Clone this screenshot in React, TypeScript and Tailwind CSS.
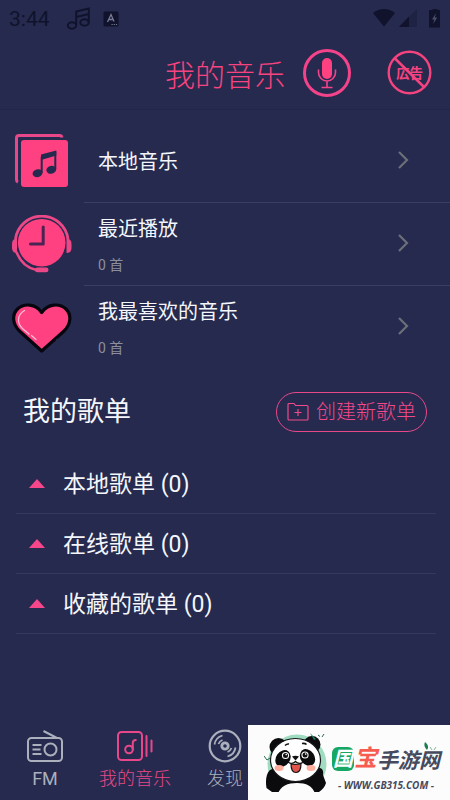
const LocalIcon = () => (
    <svg className="w-[60px] h-[60px]" viewBox="0 0 60 60" fill="none">
        <path d="M50 5.500A2.500 2.500 0 0 0 47.500 3.500H7A2.500 2.500 0 0 0 4.500 6v41.500a2.500 2.500 0 0 0 1.500 2.500" stroke="#e8488a" strokeWidth="3" />
        <rect x="9" y="8" width="47" height="47" rx="3" fill="#ff4081" />
        <path d="M29.700 41V25.500L43.300 21V37" stroke="#252a4e" strokeWidth="2" />
        <path d="M29 22.500L44.300 18.500V23.500L29 28z" fill="#252a4e" />
        <ellipse cx="25.500" cy="41.200" rx="5" ry="3.900" transform="rotate(-15 25.500 41.200)" fill="#252a4e" />
        <ellipse cx="39.300" cy="37.800" rx="5" ry="3.900" transform="rotate(-15 39.300 37.800)" fill="#252a4e" />
    </svg>
)

const RecentIcon = () => (
    <svg className="w-[60px] h-[60px]" viewBox="0 0 60 60" fill="none">
        <circle cx="29.700" cy="27.700" r="23.800" fill="#ff4081" />
        <path d="M3.500 24A26.500 26.500 0 0 1 56 24" stroke="#ec4787" strokeWidth="2.800" />
        <path d="M5 23.500Q0 23.500 0 29v4q0 5 5 5z" fill="#ec4787" />
        <path d="M54.500 23.500Q59.500 23.500 59.500 29v4q0 5-5 5z" fill="#ec4787" />
        <path d="M4.500 37c3.500 9.500 10.500 16 20 18" stroke="#ec4787" strokeWidth="2.600" />
        <rect x="23" y="52.500" width="13.500" height="4.800" rx="2.400" fill="#ec4787" />
        <path d="M31.200 12V29H18.500" stroke="#4a2452" strokeWidth="3" strokeLinecap="round" strokeLinejoin="round" />
    </svg>
)

const HeartIcon = () => (
    <svg className="w-[60px] h-[60px]" viewBox="0 0 60 60" fill="none">
        <path d="M29.700 53L8 33.500C0 26 0 16.500 5.500 11C12 5 23.500 5.500 29.700 14.500C36 5.500 47.500 5 54 11C59.500 16.500 59.500 26 51.500 33.500z" fill="#ff4081" stroke="#07060f" strokeWidth="3.200" strokeLinejoin="round" />
        <path d="M44.500 41l1.500 3" stroke="#252a4e" strokeWidth="1.800" />
        <path d="M12.500 12.500C4.500 17 5 26 11 31L17 36M19.500 37.500l4.500 4" stroke="#ffc4d9" strokeWidth="1.200" strokeLinecap="round" />
    </svg>
)

const Chevron = () => (
    <svg className="w-5 h-6" viewBox="0 0 20 24" fill="none">
        <path d="M6 4l8 8-8 8" stroke="#6c7078" strokeWidth="2.200" />
    </svg>
)

const StatusBar = () => {
    return (
        <div className="flex items-center h-9 pt-px pl-[9px] pr-[10px] text-[#10132b]">
            <span className="text-[21px] leading-6">3:44</span>
            <svg className="w-6 h-6 ml-4" viewBox="0 0 24 24" fill="none" stroke="currentColor" strokeWidth="2">
                <ellipse cx="6" cy="18.500" rx="4.200" ry="3.200" />
                <ellipse cx="18.500" cy="15.500" rx="4.200" ry="3.200" />
                <path d="M10.200 18V4.500L22.800 1.500v14M10.200 10l12.600-3" />
            </svg>
            <svg className="w-4 h-4 ml-[13px]" viewBox="0 0 16 16">
                <rect x="0.500" y="0.500" width="15" height="15" rx="1.500" fill="currentColor" />
                <path d="M4.500 11L8 3.500l3 7M6 8.500h4" fill="none" stroke="#777b94" strokeWidth="1.300" />
                <path d="M8.500 13.500h6" stroke="#777b94" strokeDasharray="1.200 1" />
            </svg>
            <svg className="w-[70px] h-5 ml-auto" viewBox="0 0 70 20" fill="currentColor">
                <path d="M3 4Q14 -4 25 4L14 17.500z" />
                <path d="M29 18L47 0v18z" opacity=".3" />
                <path d="M29 18L39 7.500V18z" />
                <path d="M60 1h2.500V-1h5V1H70v17.500H59V1z" />
                <path d="M66 4l-4 6.500h2.300L63.300 15l3.900-6.500h-2.400z" fill="#4a4e68" />
            </svg>
        </div>
    )
}

const Header = () => {
    return (
        <header className="border-b border-[#20254b]">
            <StatusBar />
            <div className="flex items-center justify-end h-[73px] pr-[18px]">
                <h1 className="pt-[6px] text-[30px] leading-9 font-light text-[#f7437f]">我的音乐</h1>
                <button type="button" aria-label="语音" className="ml-[18px]">
                    <svg className="w-12 h-12" viewBox="0 0 48 48" fill="none" stroke="#f4438a">
                        <circle cx="24" cy="24" r="22.500" strokeWidth="3" />
                        <rect x="19" y="9" width="10" height="21" rx="5" fill="#ff4081" stroke="none" />
                        <path d="M15.500 20.500v3a8.500 8.500 0 0 0 17 0v-3M24 32v6M18.500 38.500h11" strokeWidth="1.600" />
                    </svg>
                </button>
                <button type="button" aria-label="关闭广告" className="ml-9">
                    <svg className="w-[45px] h-[45px]" viewBox="0 0 45 45" fill="none" stroke="#f4437f">
                        <text x="22.500" y="27.500" textAnchor="middle" fontSize="13.500" fontWeight="700" fill="#f4437f" stroke="none">広告</text>
                        <circle cx="22.500" cy="22.500" r="20.800" strokeWidth="2.400" />
                        <path d="M7.500 8l30 29.500" strokeWidth="2.500" />
                    </svg>
                </button>
            </div>
        </header>
    )
}

const library = [
    { title: '本地音乐', count: '', icon: <LocalIcon /> },
    { title: '最近播放', count: '0 首', icon: <RecentIcon /> },
    { title: '我最喜欢的音乐', count: '0 首', icon: <HeartIcon /> },
]

const Library = () => {
    return (
        <ul className="pt-[10px]">
            {library.map((item) => (
                <li key={item.title} className="group">
                    <a href="#" className="flex items-stretch h-[83px] pl-3">
                        <span className="flex items-center w-[72px] shrink-0">{item.icon}</span>
                        <span className="flex flex-1 items-center border-b border-[#393e62] group-last:border-transparent pl-[14px] pb-[2px] pr-[37px]">
                            <span className="flex flex-col flex-1 gap-3 pt-1">
                                <span className="text-xl leading-7 text-[#f4f6fc]">{item.title}</span>
                                {item.count && <span className="text-sm leading-5 text-[#8b8e9f]">{item.count}</span>}
                            </span>
                            <Chevron />
                        </span>
                    </a>
                </li>
            ))}
        </ul>
    )
}

const playlists = ['本地歌单 (0)', '在线歌单 (0)', '收藏的歌单 (0)']

const Playlists = () => {
    return (
        <section>
            <div className="flex items-center justify-between h-[85px] px-[23px]">
                <h2 className="text-[27px] leading-9 text-[#f4f6fc]">我的歌单</h2>
                <button type="button" className="flex items-center gap-[7px] h-10 px-[10px] rounded-full border border-[#e8488a] text-xl font-light text-[#f3488a]">
                    <svg className="w-[22px] h-5" viewBox="0 0 22 20" fill="none" stroke="currentColor" strokeWidth="1.200">
                        <path d="M1 17V2.500a1 1 0 0 1 1-1h5l1.500 2H20a1 1 0 0 1 1 1V17a1 1 0 0 1-1 1H2a1 1 0 0 1-1-1zM11 7v7M7.500 10.500h7" />
                    </svg>
                    <span className="pt-px">创建新歌单</span>
                </button>
            </div>
            <ul className="pl-4 pr-[14px]">
                {playlists.map((name) => (
                    <li key={name} className="border-b border-[#343a5d]">
                        <button type="button" className="flex items-center w-full h-[59px] pl-[13px] gap-[18px] text-[23px] text-[#f4f6fc]">
                            <svg className="w-4 h-[9px]" viewBox="0 0 16 9">
                                <path d="M0 9L8 0l8 9z" fill="#f8468a" />
                            </svg>
                            <span className="pt-1">{name}</span>
                        </button>
                    </li>
                ))}
            </ul>
        </section>
    )
}

const TabBar = () => {
    return (
        <nav className="grid grid-cols-5 mt-auto h-[75px] pt-1 text-lg leading-6 text-[#acb0bc]">
            <a href="#" className="flex flex-col items-center gap-[2px]">
                <svg className="w-10 h-9" viewBox="0 0 40 36" fill="none" stroke="currentColor" strokeWidth="2">
                    <rect x="3" y="9" width="34" height="23" rx="3.500" />
                    <path d="M18.500 2L32 9M7.500 16h9M7.500 20.500h8M7.500 25h9" />
                    <circle cx="25.500" cy="20.500" r="6" />
                </svg>
                <span>FM</span>
            </a>
            <a href="#" aria-current="page" className="flex flex-col items-center gap-[2px] text-[#e8488a]">
                <svg className="w-10 h-9" viewBox="0 0 40 36" fill="none" stroke="currentColor" strokeWidth="2">
                    <rect x="3" y="3" width="24" height="28" rx="3.500" />
                    <circle cx="14" cy="20.500" r="3.800" />
                    <path d="M17.800 20.500V14q0-3 3-3M31.500 7v20M36.500 11.500v11" strokeLinecap="round" />
                </svg>
                <span className="font-light whitespace-nowrap">我的音乐</span>
            </a>
            <a href="#" className="flex flex-col items-center gap-[2px]">
                <svg className="w-10 h-9" viewBox="0 0 40 36" fill="none" stroke="currentColor" strokeWidth="2.200">
                    <circle cx="20" cy="17" r="15.300" />
                    <circle cx="20" cy="17" r="3.200" strokeWidth="2.800" />
                    <path d="M9.500 15.500a11 11 0 0 1 8-9M13.500 15a7 7 0 0 1 4-4M30.500 18.500a11 11 0 0 1-8 9M26.500 19a7 7 0 0 1-4 4" strokeWidth="1.800" />
                </svg>
                <span className="font-light">发现</span>
            </a>
        </nav>
    )
}

const Panda = () => (
    <svg className="w-16 h-[62px] shrink-0" viewBox="0 0 64 62">
        <circle cx="33" cy="32" r="29.500" fill="#a0dcc0" />
        <path d="M2.500 56C1 47 3 37 9 37c4 0 8 5 13 8l23-2c2-1 2-7 7-7 5-1 8 1 7 7l3 8c-1 4-4 7-7 9H8z" fill="#0b0b0d" />
        <path d="M14 62c2-8 10-11 19-11s16 3 18 11z" fill="#fcfcfc" />
        <circle cx="14.500" cy="15" r="9" fill="#0b0b0d" />
        <circle cx="48" cy="12.500" r="8.500" fill="#0b0b0d" />
        <ellipse cx="31.500" cy="28" rx="25" ry="21.500" fill="#fff" stroke="#16171b" strokeWidth="1.200" />
        <path d="M21 13.500q2-2 4-1.500M38 11.500q3-.5 4.500 1" fill="none" stroke="#111" strokeWidth="1.500" />
        <ellipse cx="19" cy="26.500" rx="7" ry="9" transform="rotate(35 19 26.500)" fill="#0b0b0d" />
        <ellipse cx="43.500" cy="25.500" rx="7" ry="9" transform="rotate(-35 43.500 25.500)" fill="#0b0b0d" />
        <circle cx="21.500" cy="23.500" r="3.600" fill="#fff" />
        <circle cx="41" cy="23" r="3.600" fill="#fff" />
        <circle cx="21.500" cy="23.500" r="2.500" fill="#111" />
        <circle cx="41" cy="23" r="2.500" fill="#111" />
        <circle cx="22.200" cy="22.600" r=".8" fill="#fff" />
        <circle cx="41.700" cy="22.100" r=".8" fill="#fff" />
        <ellipse cx="15" cy="36" rx="4.500" ry="3" fill="#ffae9e" />
        <ellipse cx="47" cy="36" rx="4.500" ry="3" fill="#ffae9e" />
        <path d="M28 24.500q3.500-1.500 7 0l-3.500 4z" fill="#111" />
        <path d="M24 30q4 3 7.500-.5q3.500 3.500 8 .5" fill="none" stroke="#111" strokeWidth="1.200" />
        <path d="M27 32q5 1 10-.5q0 9-5 9T27 32z" fill="#e0544b" stroke="#111" strokeWidth="1.200" />
        <path d="M46 1l6 6-2 1z" fill="#1f7a58" />
        <path d="M54 3l2 1.500M60 2l-2 3M0 24l3 4 3-2" fill="none" stroke="#27684f" />
    </svg>
)

const Badge = () => {
    return (
        <div className="absolute right-0 bottom-0 flex items-center w-[202px] h-[75px] pl-4 bg-[#fcfcfc]">
            <Panda />
            <div className="flex flex-col items-center ml-1 pt-2 italic text-[#454a5e]">
                <div className="flex items-center text-[21px] leading-8 font-bold">
                    <span className="px-px rounded-md bg-[#17a765] text-xl leading-6 text-white">国</span>
                    <span className="text-[23px] leading-8 text-[#f65d50]">宝</span>
                    <span className="pt-1 whitespace-nowrap">手游网</span>
                </div>
                <span className="text-[10px] leading-4 font-bold font-['Open_Sans',sans-serif]">- WWW.GB315.COM -</span>
            </div>
            <svg className="absolute right-3 top-4 w-4 h-4" viewBox="0 0 16 16">
                <path d="M3 1q5 4 2 8q-4-4-2-8z" fill="#1f7a58" />
                <path d="M8 6l2 3M14 6l-2 3" stroke="#7fb99f" />
            </svg>
        </div>
    )
}

const App = () => {
    return (
        <div className="relative flex flex-col min-h-screen bg-[#252a4e] font-[Roboto,'Noto_Sans_CJK_SC',sans-serif]">
            <Header />
            <main>
                <Library />
                <Playlists />
            </main>
            <TabBar />
            <Badge />
        </div>
    )
}

export default App
